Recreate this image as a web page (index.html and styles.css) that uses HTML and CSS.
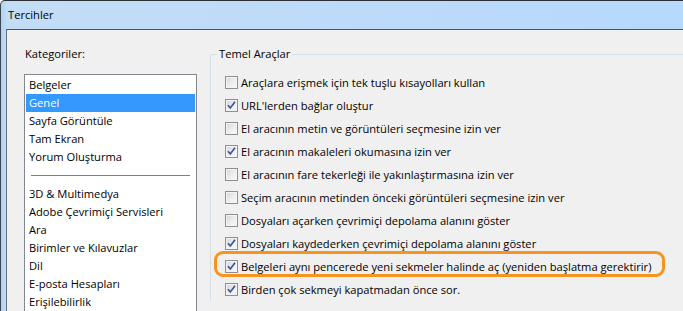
FILE: index.html
```html
<!DOCTYPE html>
<html lang="tr">
<head>
<meta charset="utf-8">
<title>Tercihler</title>
<link rel="stylesheet" href="styles.css">
</head>
<body>
<div class="window">
  <div class="titlebar">Tercihler</div>
  <div class="client">
    <div class="left">
      <div class="cat-label">Kategoriler:</div>
      <div class="listbox">
        <div class="item">Belgeler</div>
        <div class="item selected">Genel</div>
        <div class="item">Sayfa Görüntüle</div>
        <div class="item">Tam Ekran</div>
        <div class="item">Yorum Oluşturma</div>
        <div class="sep"></div>
        <div class="item">3D &amp; Multimedya</div>
        <div class="item">Adobe Çevrimiçi Servisleri</div>
        <div class="item">Ara</div>
        <div class="item">Birimler ve Kılavuzlar</div>
        <div class="item">Dil</div>
        <div class="item">E-posta Hesapları</div>
        <div class="item">Erişilebilirlik</div>
      </div>
    </div>
    <fieldset class="group">
      <legend>Temel Araçlar</legend>
      <div class="rows">
        <div class="row"><span class="cb"></span><span class="txt">Araçlara erişmek için tek tuşlu kısayolları kullan</span></div>
        <div class="row"><span class="cb"><svg viewBox="0 0 11 11" width="11" height="11"><path d="M2 5.2 L4.3 8 L9 1.8" fill="none" stroke="#3b5697" stroke-width="1.7"/></svg></span><span class="txt">URL'lerden bağlar oluştur</span></div>
        <div class="row"><span class="cb"></span><span class="txt">El aracının metin ve görüntüleri seçmesine izin ver</span></div>
        <div class="row"><span class="cb"><svg viewBox="0 0 11 11" width="11" height="11"><path d="M2 5.2 L4.3 8 L9 1.8" fill="none" stroke="#3b5697" stroke-width="1.7"/></svg></span><span class="txt">El aracının makaleleri okumasına izin ver</span></div>
        <div class="row"><span class="cb"></span><span class="txt">El aracının fare tekerleği ile yakınlaştırmasına izin ver</span></div>
        <div class="row"><span class="cb"></span><span class="txt">Seçim aracının metinden önceki görüntüleri seçmesine izin ver</span></div>
        <div class="row"><span class="cb"></span><span class="txt">Dosyaları açarken çevrimiçi depolama alanını göster</span></div>
        <div class="row"><span class="cb"><svg viewBox="0 0 11 11" width="11" height="11"><path d="M2 5.2 L4.3 8 L9 1.8" fill="none" stroke="#3b5697" stroke-width="1.7"/></svg></span><span class="txt">Dosyaları kaydederken çevrimiçi depolama alanını göster</span></div>
        <div class="row highlighted"><span class="cb"><svg viewBox="0 0 11 11" width="11" height="11"><path d="M2 5.2 L4.3 8 L9 1.8" fill="none" stroke="#3b5697" stroke-width="1.7"/></svg></span><span class="txt">Belgeleri aynı pencerede yeni sekmeler halinde aç (yeniden başlatma gerektirir)</span><span class="callout"></span></div>
        <div class="row"><span class="cb"><svg viewBox="0 0 11 11" width="11" height="11"><path d="M2 5.2 L4.3 8 L9 1.8" fill="none" stroke="#3b5697" stroke-width="1.7"/></svg></span><span class="txt">Birden çok sekmeyi kapatmadan önce sor.</span></div>
      </div>
    </fieldset>
  </div>
</div>
</body>
</html>
```
FILE: styles.css
```css
html, body {
  margin: 0;
  padding: 0;
}
body {
  width: 683px;
  height: 311px;
  overflow: hidden;
  font-family: "Open Sans", "Noto Sans", sans-serif;
  font-size: 11.15px;
  color: #000;
}
.window {
  height: 311px;
  box-sizing: border-box;
  border-top: 1px solid #2b2f36;
  border-left: 1px solid #3b4654;
  border-top-left-radius: 5px;
  background: linear-gradient(90deg, #b4d2ef 0px, #c3ddf6 6px, #bcdaf9 60%, #b6d9fd 100%);
  display: flex;
  flex-direction: column;
}
.titlebar {
  height: 28px;
  line-height: 28px;
  padding-left: 7px;
  flex: none;
}
.client {
  flex: 1;
  margin-left: 5px;
  border-top: 1px solid #4c545e;
  border-left: 1px solid #5f6e80;
  background: #f0f0f0;
  display: flex;
  align-items: flex-start;
  overflow: hidden;
}
.left {
  margin-left: 17px;
  padding-top: 16px;
  width: 173px;
  flex: none;
}
.cat-label {
  line-height: 16px;
  padding-left: 1px;
}
.listbox {
  margin-top: 12px;
  border: 1px solid #828790;
  background: #fff;
  padding: 1px 1px 20px 1px;
}
.item {
  height: 18px;
  line-height: 18px;
  padding-left: 3px;
  white-space: nowrap;
}
.item.selected {
  background: #3399ff;
  color: #fff;
}
.sep {
  height: 19px;
  margin: 0 5px;
  background: linear-gradient(#fff 9px, #3d8fe0 9px, #3d8fe0 10px, #fff 10px);
}
.group {
  flex: 1;
  margin: 16px 0 0 13px;
  padding: 0;
  border: 1px solid #d5dfe5;
  border-right: none;
  border-bottom: none;
  border-top-left-radius: 3px;
  min-width: 0;
}
.group legend {
  margin-left: 6px;
  padding: 0 2px;
  line-height: 16px;
}
.rows {
  padding-top: 9px;
  display: flex;
  flex-direction: column;
}
.row {
  height: 23px;
  display: flex;
  align-items: center;
  padding-left: 14px;
  position: relative;
  white-space: nowrap;
}
.cb {
  width: 13px;
  height: 13px;
  box-sizing: border-box;
  border: 1px solid #8e8f8f;
  box-shadow: inset 0 0 0 1px #f4f4f4;
  background: linear-gradient(135deg, #d2d4d8 0%, #eeeeee 55%, #fbfbfb 100%);
  flex: none;
  display: flex;
  align-items: center;
  justify-content: center;
}
.cb svg {
  display: block;
}
.txt {
  margin-left: 3px;
}
.callout {
  position: absolute;
  left: 3px;
  top: -4px;
  width: 451px;
  height: 26px;
  box-sizing: border-box;
  border: 3px solid #f7941d;
  border-radius: 9px;
}
```
